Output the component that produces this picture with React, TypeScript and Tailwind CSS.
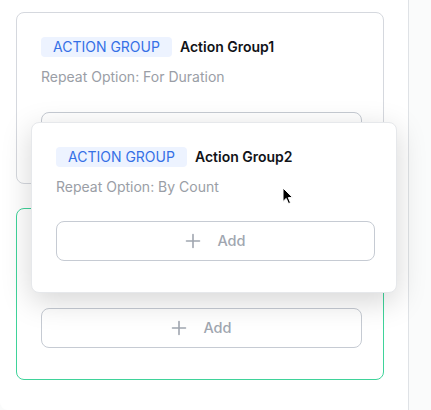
import React from 'react';

interface GroupCardProps {
  name: string;
  repeat: string;
  active?: boolean;
}

const PlusIcon = () => (
  <svg width="16" height="16" viewBox="0 0 16 16" fill="none" stroke="currentColor" strokeWidth="1.6" strokeLinecap="round">
    <path d="M8 1.5v13M1.5 8h13" />
  </svg>
);

const AddButton = () => (
  <button className="flex h-10 w-full items-center justify-center gap-4 rounded-lg border border-[#c6cbd3] bg-white text-[14.5px] font-medium text-[#a0a6b0]">
    <PlusIcon />
    <span>Add</span>
  </button>
);

const Header = ({ name }: { name: string }) => (
  <div className="flex h-5 items-center gap-2">
    <span className="flex h-5 items-center rounded bg-[#edf3ff] px-3 text-[14px] leading-5 text-[#3570e6]">ACTION GROUP</span>
    <span className="text-[14px] font-semibold leading-5 text-[#111318]">{name}</span>
  </div>
);

const GroupCard: React.FC<GroupCardProps> = ({ name, repeat, active }) => (
  <div
    className={`flex h-[172px] w-[368px] flex-col rounded-lg border bg-white pl-6 pr-[21px] pt-6 ${
      active ? 'border-[#3fd39a]' : 'border-[#d5d8de]'
    }`}
  >
    <Header name={name} />
    <div className="mt-[10px] text-[14px] leading-5 text-[#9a9ea6]">{repeat}</div>
    <div className="mt-[25px]">
      <AddButton />
    </div>
  </div>
);

const Cursor = () => (
  <svg width="12" height="18" viewBox="0 0 12 18" className="absolute left-[282px] top-[187px]">
    <path d="M1 1v13.5l3.2-3.1 2.3 5.2 2-0.9-2.2-5.1h4.4z" fill="#000" stroke="#fff" strokeWidth="1" strokeLinejoin="round" />
  </svg>
);

export default function App() {
  return (
    <div className="relative flex h-[410px] w-[431px] overflow-hidden bg-[#fafbfb] font-['Inter','Liberation_Sans',sans-serif]">
      <div className="flex w-[409px] shrink-0 flex-col gap-6 rounded-bl-lg border-r border-[#dfe2e6] bg-white pl-4 pt-3">
        <GroupCard name="Action Group1" repeat="Repeat Option: For Duration" />
        <GroupCard name="Action Group3" repeat="Repeat Option: For Duration" active />
      </div>

      {/* dragged item overlay */}
      <div className="absolute left-[31px] top-[122px] flex h-[171px] w-[366px] flex-col rounded-lg border border-[#e6e8eb] bg-white pl-6 pr-[21px] pt-6 shadow-[0_8px_30px_rgba(0,0,0,0.17)]">
        <Header name="Action Group2" />
        <div className="mt-[10px] text-[14px] leading-5 text-[#9a9ea6]">Repeat Option: By Count</div>
        <div className="mt-6">
          <AddButton />
        </div>
      </div>

      <Cursor />
    </div>
  );
}
